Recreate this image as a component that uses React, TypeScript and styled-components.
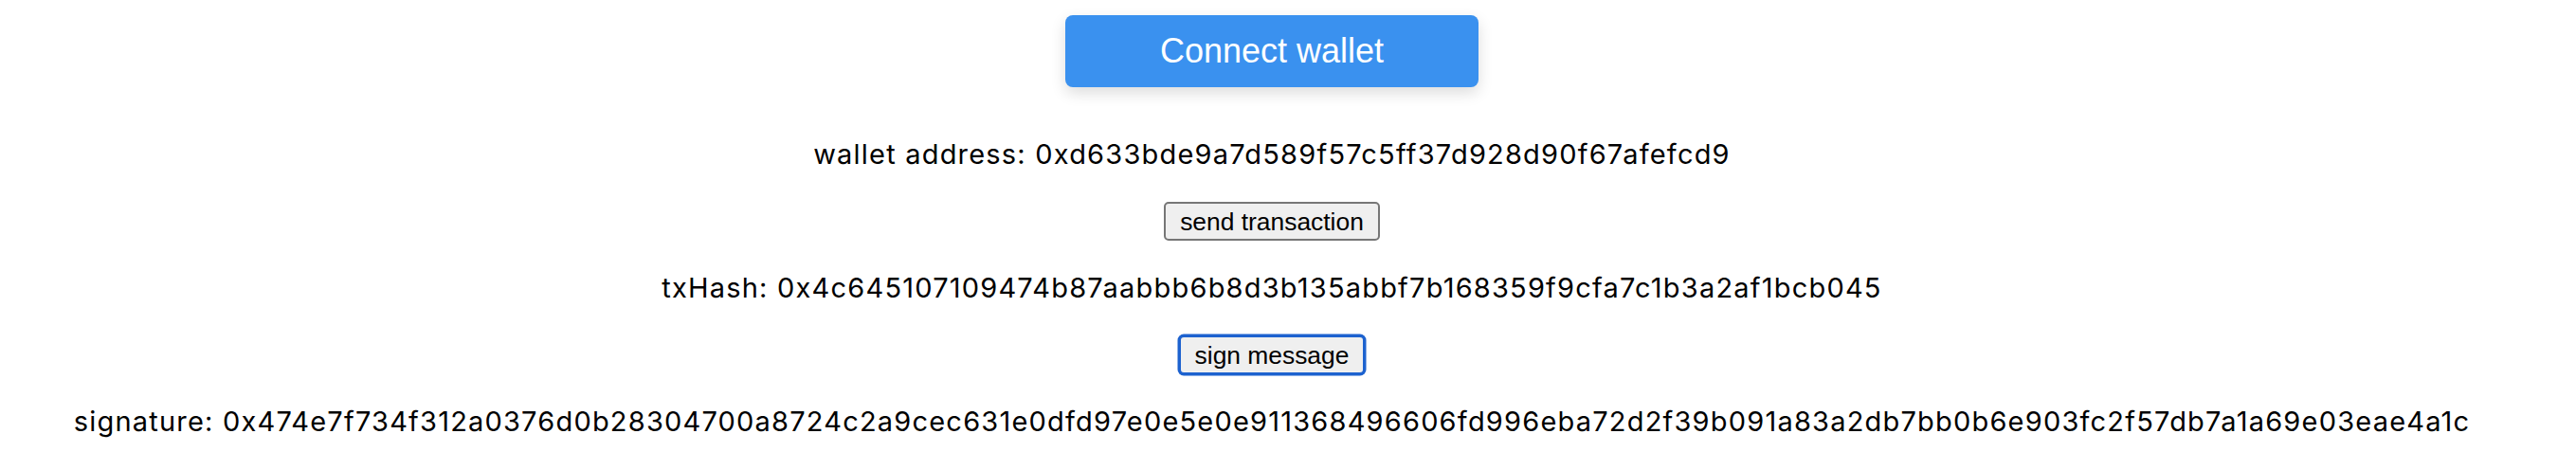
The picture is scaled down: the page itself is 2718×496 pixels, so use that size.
import React from "react";
import styled, { createGlobalStyle } from "styled-components";

const GlobalStyle = createGlobalStyle`
  html, body {
    margin: 0;
    padding: 0;
    background: #ffffff;
  }
  body {
    font-family: Inter, "Noto Sans", "Liberation Sans", sans-serif;
    color: #000000;
  }
`;

const Page = styled.main`
  display: flex;
  flex-direction: column;
  align-items: center;
  padding: 16px 34px 0 0;
  gap: 30px;
`;

const ConnectButton = styled.button`
  width: 436px;
  height: 76px;
  margin-bottom: 21px;
  border: none;
  border-radius: 8px;
  background: #3a91ef;
  color: #ffffff;
  font-family: "Liberation Sans", Arial, sans-serif;
  font-size: 36px;
  box-shadow: 0 6px 16px rgba(0, 0, 0, 0.14);
  cursor: pointer;
`;

const InfoLine = styled.p`
  margin: 0;
  height: 40px;
  line-height: 40px;
  font-size: 29px;
  letter-spacing: 1.2px;
  white-space: nowrap;
`;

const ActionButton = styled.button<{ $focused?: boolean }>`
  box-sizing: border-box;
  height: 41px;
  padding: 0 15px;
  border: 2px solid ${(p) => (p.$focused ? "#1d62cf" : "#767676")};
  border-radius: 5px;
  background: #efefef;
  color: #000000;
  font-family: "Liberation Sans", Arial, sans-serif;
  font-size: 26.4px;
  line-height: 30px;
  box-shadow: ${(p) => (p.$focused ? "0 0 0 1.5px #1d62cf" : "none")};
  cursor: pointer;
`;

const address = "0xd633bde9a7d589f57c5ff37d928d90f67afefcd9";
const txHash =
  "0x4c645107109474b87aabbb6b8d3b135abbf7b168359f9cfa7c1b3a2af1bcb045";
const signature =
  "0x474e7f734f312a0376d0b28304700a8724c2a9cec631e0dfd97e0e5e0e911368496606fd996eba72d2f39b091a83a2db7bb0b6e903fc2f57db7a1a69e03eae4a1c";

export default function App() {
  return (
    <>
      <GlobalStyle />
      <Page>
        <ConnectButton>Connect wallet</ConnectButton>
        <InfoLine>wallet address: {address}</InfoLine>
        <ActionButton>send transaction</ActionButton>
        <InfoLine>txHash: {txHash}</InfoLine>
        <ActionButton $focused>sign message</ActionButton>
        <InfoLine>signature: {signature}</InfoLine>
      </Page>
    </>
  );
}
